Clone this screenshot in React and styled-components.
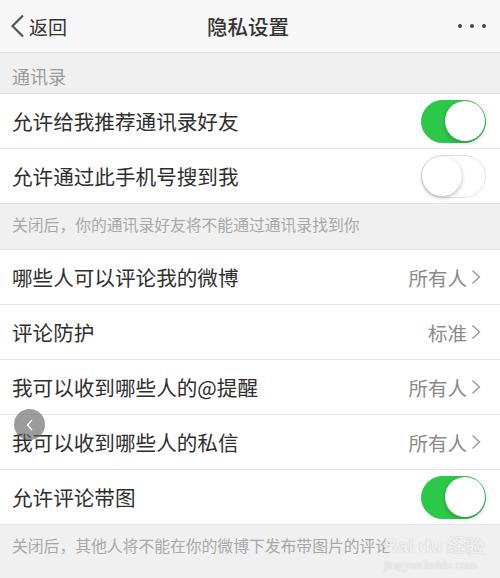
import React from "react";
import styled, { createGlobalStyle } from "styled-components";

const GlobalStyle = createGlobalStyle`
  body {
    margin: 0;
    background: #f0f0f0;
    font-family: "Noto Sans CJK SC", "Noto Sans", sans-serif;
  }
`;

const Page = styled.div`
  position: relative;
  width: 500px;
  height: 578px;
  overflow: hidden;
  background: #f0f0f0;
`;

const Header = styled.div`
  height: 52px;
  display: flex;
  align-items: center;
  justify-content: space-between;
  padding: 0 14px 0 10px;
  background: #f7f7f7;
  border-bottom: 1px solid #e2e2e2;
`;

const Back = styled.div`
  width: 90px;
  display: flex;
  align-items: center;
  gap: 4px;
  font-size: 19px;
  color: #333;
`;

const Title = styled.div`
  font-size: 20.5px;
  font-weight: 500;
  color: #333;
`;

const More = styled.div`
  width: 90px;
  display: flex;
  justify-content: flex-end;
  gap: 8px;
`;

const Dot = styled.span`
  width: 4px;
  height: 4px;
  border-radius: 50%;
  background: #444;
`;

const SectionLabel = styled.div`
  height: 40px;
  box-sizing: border-box;
  padding: 6px 0 0 12px;
  display: flex;
  align-items: center;
  font-size: 18px;
  color: #9a9a9a;
`;

const Group = styled.div`
  background: #fff;
  border-top: 1px solid #e2e2e2;
`;

const Row = styled.div`
  height: 54px;
  display: flex;
  align-items: center;
  justify-content: space-between;
  padding: 0 14px 0 12px;
  border-bottom: 1px solid #e6e6e6;
`;

const Label = styled.span`
  font-size: 20.6px;
  color: #2e2e2e;
`;

const Value = styled.span`
  display: flex;
  align-items: center;
  gap: 4px;
  font-size: 19.5px;
  color: #8a8a8a;
  margin-right: 5px;
`;

const Note = styled.div`
  height: 45px;
  box-sizing: border-box;
  padding: 9px 0 0 12px;
  font-size: 15.8px;
  color: #a8a8a8;
`;

const Track = styled.div`
  position: relative;
  width: 65px;
  height: 43px;
  box-sizing: border-box;
  border-radius: 22px;
  background: ${(p) => (p.on ? "#2cc84a" : "#fff")};
  border: 1.5px solid ${(p) => (p.on ? "#2cc84a" : "#e2e2e2")};
`;

const Knob = styled.div`
  position: absolute;
  top: 0;
  left: ${(p) => (p.on ? "23px" : "0")};
  width: 40px;
  height: 40px;
  border-radius: 50%;
  background: #fff;
  box-shadow: 0 2px 4px rgba(0, 0, 0, 0.22), 0 0 1px rgba(0, 0, 0, 0.2);
`;

const Floater = styled.div`
  position: absolute;
  left: 14px;
  top: 409px;
  width: 31px;
  height: 31px;
  border-radius: 50%;
  background: rgba(95, 95, 95, 0.62);
  display: flex;
  align-items: center;
  justify-content: center;
`;

const Watermark = styled.div`
  position: absolute;
  left: 384px;
  top: 536px;
  color: rgba(255, 255, 255, 0.8);
  text-shadow: 0 0 1px rgba(150, 150, 150, 0.7);
  font-family: "Liberation Sans", sans-serif;
  line-height: 1;
`;

const WmTop = styled.div`
  font-size: 19px;
  font-weight: bold;
`;

const WmSub = styled.div`
  font-family: "Liberation Serif", serif;
  font-size: 12.5px;
  margin-top: 4px;
`;

const Toggle = ({ on }) => (
  <Track on={on}>
    <Knob on={on} />
  </Track>
);

const Chevron = () => (
  <svg width="10" height="16" viewBox="0 0 10 16">
    <polyline points="1.5,1.5 8.5,8 1.5,14.5" fill="none" stroke="#999" strokeWidth="1.4" />
  </svg>
);

const ValueCell = ({ text }) => (
  <Value>
    {text}
    <Chevron />
  </Value>
);

export default function App() {
  return (
    <>
      <GlobalStyle />
      <Page>
        <Header>
          <Back>
            <svg width="15" height="24" viewBox="0 0 15 24">
              <polyline points="13,1.5 2.5,12 13,22.5" fill="none" stroke="#555" strokeWidth="2.2" />
            </svg>
            返回
          </Back>
          <Title>隐私设置</Title>
          <More>
            <Dot />
            <Dot />
            <Dot />
          </More>
        </Header>

        <SectionLabel>通讯录</SectionLabel>
        <Group>
          <Row>
            <Label>允许给我推荐通讯录好友</Label>
            <Toggle on />
          </Row>
          <Row>
            <Label>允许通过此手机号搜到我</Label>
            <Toggle />
          </Row>
        </Group>
        <Note>关闭后，你的通讯录好友将不能通过通讯录找到你</Note>

        <Group>
          <Row>
            <Label>哪些人可以评论我的微博</Label>
            <ValueCell text="所有人" />
          </Row>
          <Row>
            <Label>评论防护</Label>
            <ValueCell text="标准" />
          </Row>
          <Row>
            <Label>我可以收到哪些人的@提醒</Label>
            <ValueCell text="所有人" />
          </Row>
          <Row>
            <Label>我可以收到哪些人的私信</Label>
            <ValueCell text="所有人" />
          </Row>
          <Row>
            <Label>允许评论带图</Label>
            <Toggle on />
          </Row>
        </Group>
        <Note>关闭后，其他人将不能在你的微博下发布带图片的评论</Note>

        <Floater>
          <svg width="10" height="14" viewBox="0 0 10 14">
            <polyline points="7,2 2.5,7 7,12" fill="none" stroke="#fff" strokeWidth="1.3" />
          </svg>
        </Floater>

        <Watermark>
          <WmTop>Bai du 经验</WmTop>
          <WmSub>jingyan.baidu.com</WmSub>
        </Watermark>
      </Page>
    </>
  );
}
